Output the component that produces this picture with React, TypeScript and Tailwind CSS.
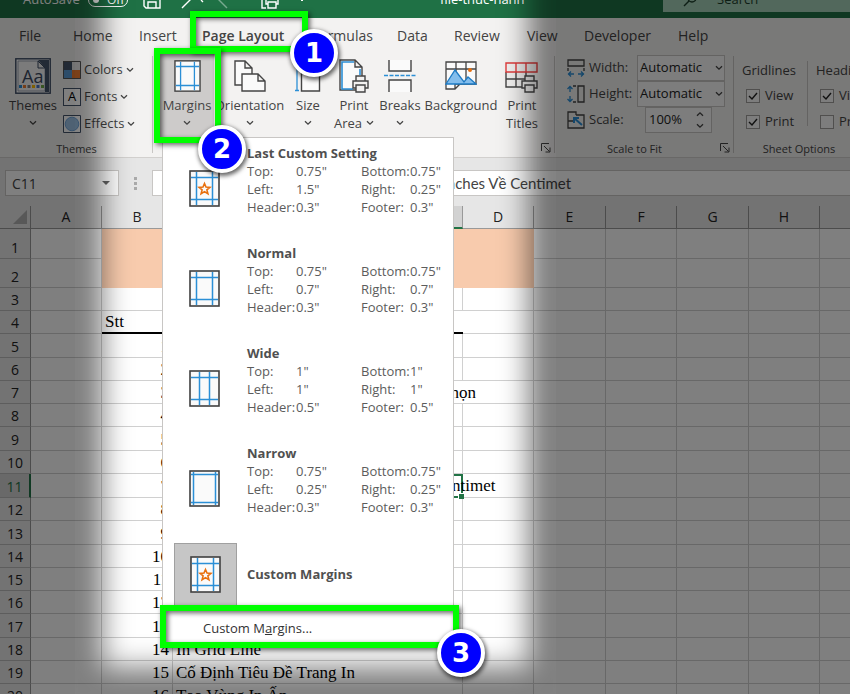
import type { ReactNode } from 'react';

type IconKind = 'star' | 'normal' | 'wide' | 'narrow';

interface MarginPreset {
  name: string;
  icon: IconKind;
  rows: [string, string, string, string][];
}

const presets: MarginPreset[] = [
  {
    name: 'Last Custom Setting',
    icon: 'star',
    rows: [
      ['Top:', '0.75"', 'Bottom:', '0.75"'],
      ['Left:', '1.5"', 'Right:', '0.25"'],
      ['Header:', '0.3"', 'Footer:', '0.3"'],
    ],
  },
  {
    name: 'Normal',
    icon: 'normal',
    rows: [
      ['Top:', '0.75"', 'Bottom:', '0.75"'],
      ['Left:', '0.7"', 'Right:', '0.7"'],
      ['Header:', '0.3"', 'Footer:', '0.3"'],
    ],
  },
  {
    name: 'Wide',
    icon: 'wide',
    rows: [
      ['Top:', '1"', 'Bottom:', '1"'],
      ['Left:', '1"', 'Right:', '1"'],
      ['Header:', '0.5"', 'Footer:', '0.5"'],
    ],
  },
  {
    name: 'Narrow',
    icon: 'narrow',
    rows: [
      ['Top:', '0.75"', 'Bottom:', '0.75"'],
      ['Left:', '0.25"', 'Right:', '0.25"'],
      ['Header:', '0.3"', 'Footer:', '0.3"'],
    ],
  },
];

// [left/right guide offset, top/bottom guide offset]
const guides: Record<IconKind, [number, number]> = {
  star: [7, 7],
  normal: [7, 7],
  wide: [10, 7],
  narrow: [4, 4],
};

function MarginIcon({ kind, className }: { kind: IconKind; className: string }) {
  const [gx, gy] = guides[kind];
  return (
    <svg viewBox="0 0 31 37" className={className} fill="none">
      <rect x="1" y="1" width="29" height="35" fill="#fafafa" stroke="#404040" strokeWidth="1.6" />
      <path
        d={`M${gx + 0.5} 2V35M${30.5 - gx} 2V35M2 ${gy + 0.5}H29M2 ${36.5 - gy}H29`}
        stroke="#2b8fd6"
        strokeWidth="1.5"
      />
      {kind === 'star' && (
        <path
          d="M15.5 13.5l1.5 3.6 3.9.3-3 2.5 1 3.8-3.4-2.1-3.4 2.1 1-3.8-3-2.5 3.9-.3z"
          stroke="#e8700f"
          strokeWidth="1.6"
        />
      )}
    </svg>
  );
}

function Chevron() {
  return (
    <svg viewBox="0 0 8 6" className="h-[6px] w-2 shrink-0" fill="none" stroke="#444" strokeWidth="1.3">
      <path d="M1 1.2l3 3 3-3" />
    </svg>
  );
}

function Launcher() {
  return (
    <button aria-label="Dialog launcher" className="absolute right-1 bottom-1">
      <svg viewBox="0 0 10 10" className="h-[10px] w-[10px]" fill="none" stroke="#444">
        <path d="M.5 8V.5H8M3 3l5.5 5.5M9 4.5V9H4.5" />
      </svg>
    </button>
  );
}

interface BigButtonProps {
  icon: ReactNode;
  lines: string[];
  className: string;
  noChevron?: boolean;
}

function BigButton({ icon, lines, className, noChevron }: BigButtonProps) {
  return (
    <button className={`flex shrink-0 flex-col items-center pt-1 ${className}`}>
      <span className="flex h-10 items-center">{icon}</span>
      <span className="h-[18px] leading-[18px] whitespace-nowrap">{lines[0]}</span>
      <span className="flex h-[17px] items-center gap-1 leading-[18px]">
        {lines[1]}
        {!noChevron && <Chevron />}
      </span>
    </button>
  );
}

function GroupLabel({ children, className = '' }: { children: string; className?: string }) {
  return (
    <h2 className={`absolute inset-x-0 bottom-0 text-center text-[11px] leading-[16px] ${className}`}>{children}</h2>
  );
}

function Printer({ x, y }: { x: number; y: number }) {
  return (
    <g transform={`translate(${x} ${y})`} stroke="#444" strokeWidth="1.4" fill="#f3f2f1">
      <path d="M4 6V1h9v5M1 6h15v7H1z" />
      <path d="M4 10h9v7H4z" />
    </g>
  );
}

function Ribbon() {
  return (
    <div className="flex h-[106px] overflow-hidden border-b border-[#d2d0ce] bg-[#f3f2f1] text-[#444]">
      {/* Themes */}
      <section className="relative flex w-[153px] shrink-0 pl-[5px]">
        <BigButton
          className="w-14"
          lines={['Themes']}
          icon={
            <svg viewBox="0 0 36 36" className="h-9 w-9" fill="none">
              <rect x=".8" y=".8" width="34.4" height="34.4" fill="#fff" stroke="#3b4a63" strokeWidth="1.4" />
              <path d="M3 3h20l7 7v23H3z" fill="#f6f6f6" stroke="#8a94a6" strokeWidth=".8" />
              <path d="M23 2h11v32h-4V10z" fill="#44546a" />
              <path d="M23 3v7h7z" fill="#eee" stroke="#3b4a63" />
              <text x="7" y="25" fontSize="18" fontFamily="Open Sans, sans-serif" fill="#3b4a63">Aa</text>
              <path d="M4 27h3v3H4z" fill="#2b8fd6" />
              <path d="M8 27h3v3H8z" fill="#ed7d31" />
              <path d="M12.500 27h3v3h-3z" fill="#7f7f7f" />
              <path d="M17 27h3v3h-3z" fill="#ffc000" />
              <path d="M21.500 27h3v3h-3z" fill="#4472c4" />
              <path d="M26 27h3v3h-3z" fill="#70ad47" />
            </svg>
          }
        />
        <div className="flex flex-col pt-1 pl-[2px]">
          <button className="flex h-[27px] items-center gap-[3px]">
            <svg viewBox="0 0 18 18" className="h-[18px] w-[18px]">
              <path d="M0 0h9v9H0z" fill="#44546a" />
              <path d="M9 0h9v9H9z" fill="#e7e6e6" />
              <path d="M0 9h9v9H0z" fill="#5b9bd5" />
              <path d="M9 9h9v9H9z" fill="#ed7d31" />
              <path d="M.5 .5h17v17H.5z" fill="none" stroke="#555" />
            </svg>
            Colors <Chevron />
          </button>
          <button className="flex h-[27px] items-center gap-[3px]">
            <span className="flex h-[18px] w-[18px] items-center justify-center border border-[#44546a] bg-white text-[13px] leading-none text-black">A</span>
            Fonts <Chevron />
          </button>
          <button className="flex h-[27px] items-center gap-[3px]">
            <svg viewBox="0 0 18 18" className="h-[18px] w-[18px]">
              <path d="M.5 .5h17v17H.5z" fill="#fff" stroke="#44546a" />
              <circle cx="9" cy="9" r="6.800" fill="#9dc3e6" stroke="#6fa3d8" />
            </svg>
            Effects <Chevron />
          </button>
        </div>
        <GroupLabel>Themes</GroupLabel>
        <div className="absolute right-0 top-1 bottom-1 border-r border-[#c8c6c4]" />
      </section>

      {/* Page setup */}
      <section className="relative flex w-[402px] shrink-0 pl-[7px]">
        <BigButton
          className="h-[85px] w-[54px] bg-[#cdcbca]"
          lines={['Margins']}
          icon={<MarginIcon kind="normal" className="h-8 w-[27px]" />}
        />
        <BigButton
          className="w-[71px]"
          lines={['Orientation']}
          icon={
            <svg viewBox="0 0 32 32" className="h-8 w-8" fill="#fafafa" stroke="#444" strokeWidth="1.4">
              <path d="M1 1h10l7 7v17H1zM11 1v7h7" />
              <path d="M8 14h16l7 7v10H8zM24 14v7h7" />
            </svg>
          }
        />
        <BigButton
          className="w-[46px]"
          lines={['Size']}
          icon={
            <svg viewBox="0 0 26 32" className="h-8 w-[26px]" fill="none">
              <path d="M6.500 1h11l7 7v23h-18zM17.500 1v7h7" fill="#fafafa" stroke="#444" strokeWidth="1.4" />
              <path d="M2 6v25M0 6.500h4M0 30.500h4M7 1h10" stroke="#2b8fd6" strokeWidth="1.3" />
            </svg>
          }
        />
        <BigButton
          className="w-[46px]"
          lines={['Print', 'Area']}
          icon={
            <svg viewBox="0 0 32 34" className="h-[34px] w-8" fill="none">
              <path d="M2 1h15l7 7v23H2zM17 1v7h7" fill="#fafafa" stroke="#444" strokeWidth="1.4" />
              <path d="M16 3H4v27h11M22 10v6" stroke="#2b8fd6" strokeWidth="1.600" />
              <Printer x={14} y={16} />
            </svg>
          }
        />
        <BigButton
          className="w-[46px]"
          lines={['Breaks']}
          icon={
            <svg viewBox="0 0 32 32" className="h-8 w-8" fill="none" stroke="#444" strokeWidth="1.4">
              <path d="M5 0v11h22V0M5 32V20h22v12" fill="#fafafa" />
              <path d="M0 15.500h32" stroke="#2b8fd6" strokeDasharray="4 1.500" />
            </svg>
          }
        />
        <BigButton
          className="w-[76px]"
          lines={['Background']}
          noChevron
          icon={
            <svg viewBox="0 0 32 32" className="h-8 w-8" fill="none" stroke="#444" strokeWidth="1.3">
              <path d="M1 2h30v22H15l-5 5H1zM1 9h30M11 2v22M21 2v22M10 29v-5h5" fill="#fafafa" />
              <path d="M1 24l9-14 9 12 4-5 8 7z" fill="#83bdec" stroke="#1e7bc4" />
              <circle cx="25" cy="10" r="2" fill="#e8700f" stroke="none" />
            </svg>
          }
        />
        <BigButton
          className="w-[46px]"
          lines={['Print', 'Titles']}
          noChevron
          icon={
            <svg viewBox="0 0 34 34" className="h-[34px] w-[34px]" fill="none" strokeWidth="1.4">
              <path d="M1 13v15h18M11 13v15M21 13v6M1 20h20" stroke="#444" />
              <path d="M1 4h31v9H1zM11 4v9M21 4v9" stroke="#e03c3c" />
              <Printer x={16} y={16} />
            </svg>
          }
        />
        <Launcher />
        <div className="absolute right-0 top-1 bottom-1 border-r border-[#c8c6c4]" />
      </section>

      {/* Scale to fit */}
      <section className="relative w-[179px] shrink-0 pt-[3px] pl-3">
        <div className="flex h-[26px] items-center">
          <svg viewBox="0 0 18 18" className="mr-1 h-[18px] w-[18px]" fill="none" stroke="#444" strokeWidth="1.3">
            <path d="M1 1h16v6H1zM1 9v3M17 9v3" />
            <path d="M1 15h6M11 15h6M4 12.500L1.500 15 4 17.500M14 12.500l2.500 2.500-2.500 2.500" stroke="#2b8fd6" />
          </svg>
          <label htmlFor="fit-width" className="w-12">Width:</label>
          <ComboBox id="fit-width" />
        </div>
        <div className="flex h-[26px] items-center">
          <svg viewBox="0 0 18 18" className="mr-1 h-[18px] w-[18px]" fill="none" stroke="#444" strokeWidth="1.3">
            <path d="M11 1h6v16h-6zM6 1h3M6 17h3" />
            <path d="M3 1v6M3 11v6M.5 4L3 1.500 5.500 4M.5 14L3 16.500 5.500 14" stroke="#2b8fd6" />
          </svg>
          <label htmlFor="fit-height" className="w-12">Height:</label>
          <ComboBox id="fit-height" />
        </div>
        <div className="flex h-[26px] items-center">
          <svg viewBox="0 0 18 18" className="mr-1 h-[18px] w-[18px]" fill="none" stroke="#444" strokeWidth="1.3">
            <path d="M1 10V1h8v3M9 4h8v13H1v-7h5" />
            <path d="M15 14L7 7M7 12V7h5" stroke="#2b8fd6" strokeWidth="2" />
          </svg>
          <label htmlFor="fit-scale" className="w-14">Scale:</label>
          <div className="flex h-[26px] w-[67px] items-center border border-[#c8c6c4] bg-[#fafafa]">
            <input id="fit-scale" defaultValue="100%" className="w-[50px] bg-transparent pl-[3px] text-[#222]" />
            <div className="flex flex-col gap-[6px]">
              <button aria-label="Increase scale" className="rotate-180"><Chevron /></button>
              <button aria-label="Decrease scale"><Chevron /></button>
            </div>
          </div>
        </div>
        <GroupLabel className="pr-5">Scale to Fit</GroupLabel>
        <Launcher />
        <div className="absolute right-0 top-1 bottom-1 border-r border-[#c8c6c4]" />
      </section>

      {/* Sheet options */}
      <section className="relative flex w-[130px] shrink-0 pt-[5px]">
        <OptionColumn title="Gridlines" print />
        <div className="mt-1 h-[65px] border-r border-[#c8c6c4]" />
        <OptionColumn title="Headings" />
        <GroupLabel>Sheet Options</GroupLabel>
      </section>
    </div>
  );
}

function ComboBox({ id }: { id: string }) {
  return (
    <div className="relative">
      <select id={id} className="h-[26px] w-[88px] appearance-none border border-[#c8c6c4] bg-[#fafafa] pl-[2px] text-[#222]">
        <option>Automatic</option>
      </select>
      <span className="pointer-events-none absolute top-[10px] right-[2px]"><Chevron /></span>
    </div>
  );
}

function OptionColumn({ title, print = false }: { title: string; print?: boolean }) {
  return (
    <fieldset className="w-[73px] shrink-0 pl-2">
      <legend className="h-[26px] leading-[26px] whitespace-nowrap">{title}</legend>
      {[
        { label: 'View', on: true },
        { label: 'Print', on: print },
      ].map(({ label, on }) => (
        <label key={label} className="flex h-[26px] items-center gap-[5px] pl-1">
          <span className="relative flex">
            <input
              type="checkbox"
              defaultChecked={on}
              className="peer h-[14px] w-[14px] appearance-none border border-[#a19f9d] bg-[#fafafa]"
            />
            <svg
              viewBox="0 0 14 14"
              className="pointer-events-none absolute inset-0 hidden h-[14px] w-[14px] peer-checked:block"
              fill="none"
              stroke="#222"
              strokeWidth="1.4"
            >
              <path d="M3 7l3 3 5-6" />
            </svg>
          </span>
          {label}
        </label>
      ))}
    </fieldset>
  );
}

const tabs = [
  { name: 'File', className: 'w-[54px]' },
  { name: 'Home', className: 'w-[66px]' },
  { name: 'Insert', className: 'w-[63px]' },
  { name: 'Page Layout', className: 'w-[110px]' },
  { name: 'Formulas', className: 'w-[85px]' },
  { name: 'Data', className: 'w-[57px]' },
  { name: 'Review', className: 'w-[73px]' },
  { name: 'View', className: 'w-[57px]' },
  { name: 'Developer', className: 'w-[94px]' },
  { name: 'Help', className: 'w-[53px]' },
];

function TitleBar() {
  return (
    <header className="flex h-[18px] items-end overflow-hidden bg-[#1f7145] text-[13px] text-white">
      <div className="flex h-9 w-full shrink-0 items-center">
        <span className="w-[88px] pl-[23px]">AutoSave</span>
        <button className="flex h-[14px] w-10 items-center rounded-full border border-white pl-1">
          <span className="h-[6px] w-[6px] rounded-full bg-white" />
          <span className="pl-2 text-xs leading-none">Off</span>
        </button>
        <svg viewBox="0 0 18 18" className="ml-[15px] h-[18px] w-[18px]" fill="none" stroke="#fff" strokeWidth="1.4">
          <path d="M1 1h16v16H3l-2-2zM5 17v-6h8v6" />
        </svg>
        <svg viewBox="0 0 48 18" className="ml-5 h-[18px] w-12" fill="none" stroke="#fff" strokeWidth="1.4">
          <path d="M1 17L12 6M20 9l2 2" />
          <path d="M46 17L35 6" opacity=".4" />
        </svg>
        <svg viewBox="0 0 18 18" className="ml-[32px] h-[18px] w-[18px]" fill="none" stroke="#fff" strokeWidth="1.4">
          <path d="M5 17H1V1h11v5M7 13H5V8h12v5h-2M7 11h8v6H7z" />
        </svg>
        <span className="ml-[19px]">
          <svg viewBox="0 0 8 6" className="h-[6px] w-2" fill="none" stroke="#fff"><path d="M1 1l3 3 3-3" /></svg>
        </span>
        <span className="ml-[134px] w-[223px] whitespace-nowrap">file-thuc-hanh</span>
        <div className="flex h-6 flex-1 items-center bg-[#a5d0b8] text-[#1d3f2c]">
          <svg viewBox="0 0 14 14" className="mr-5 ml-5 h-[14px] w-[14px]" fill="none" stroke="currentColor" strokeWidth="1.4">
            <path d="M1 13l5-5" />
            <circle cx="9" cy="5" r="4" />
          </svg>
          <input aria-label="Search" placeholder="Search" className="w-24 bg-transparent placeholder:text-[#1d3f2c]" />
        </div>
      </div>
    </header>
  );
}

function FormulaBar() {
  return (
    <div className="flex h-12 items-center bg-[#e6e6e6] pt-[2px] text-[#444]">
      <div className="ml-[5px] flex h-[26px] w-[114px] items-center border border-[#c8c6c4] bg-white pr-2">
        <input aria-label="Name Box" defaultValue="C11" className="min-w-0 flex-1 bg-transparent pl-[6px] text-[14px]" />
        <svg viewBox="0 0 8 4" className="h-1 w-2" fill="#666"><path d="M0 0h8L4 4z" /></svg>
      </div>
      <div className="mx-[15px] flex flex-col gap-[2px]">
        <i className="h-[3px] w-[3px] bg-[#aaa]" />
        <i className="h-[3px] w-[3px] bg-[#aaa]" />
        <i className="h-[3px] w-[3px] bg-[#aaa]" />
      </div>
      <div className="flex h-[26px] flex-1 items-center border border-r-0 border-[#c8c6c4] bg-white font-[Lato,sans-serif] text-[15px]">
        <input
          aria-label="Formula"
          defaultValue="Chuyển Đổi Đơn Vị In Từ Inches Về Centimet"
          className="ml-[122px] w-full bg-transparent"
        />
      </div>
    </div>
  );
}

interface SheetRow {
  n: number;
  height: string;
  b?: string;
  c?: string;
}

const sheetRows: SheetRow[] = [
  { n: 1, height: 'h-[30px]' },
  { n: 2, height: 'h-[29px]' },
  { n: 3, height: 'h-[23px]' },
  { n: 4, height: 'h-[23px]', b: 'Stt' },
  { n: 5, height: 'h-[24px]', b: '1' },
  { n: 6, height: 'h-[23px]', b: '2' },
  { n: 7, height: 'h-[23px]', b: '3', c: 'Cách Chỉ In Các Vùng Dữ Liệu Được Chọn' },
  { n: 8, height: 'h-[23px]', b: '4' },
  { n: 9, height: 'h-[24px]', b: '5' },
  { n: 10, height: 'h-[23px]', b: '6' },
  { n: 11, height: 'h-[23px]', b: '7', c: 'Chuyển Đổi Đơn Vị In Từ Inches Về Centimet' },
  { n: 12, height: 'h-[23px]', b: '8' },
  { n: 13, height: 'h-[24px]', b: '9' },
  { n: 14, height: 'h-[23px]', b: '10' },
  { n: 15, height: 'h-[23px]', b: '11' },
  { n: 16, height: 'h-[23px]', b: '12' },
  { n: 17, height: 'h-[24px]', b: '13' },
  { n: 18, height: 'h-[23px]', b: '14', c: 'In Grid Line' },
  { n: 19, height: 'h-[23px]', b: '15', c: 'Cố Định Tiêu Đề Trang In' },
  { n: 20, height: 'h-[23px]', b: '16', c: 'Tạo Vùng In Ấn' },
];

function Sheet() {
  return (
    <table className="w-full min-w-[891px] table-fixed border-separate border-spacing-0 bg-white">
      <colgroup>
        <col className="w-[31px]" />
        <col className="w-[71px]" />
        <col className="w-[71px]" />
        <col className="w-[290px]" />
        <col className="w-[71px]" />
        <col className="w-[72px]" />
        <col className="w-[71px]" />
        <col className="w-[72px]" />
        <col className="w-[71px]" />
        <col />
      </colgroup>
      <thead>
        <tr className="h-[23px] bg-[#e6e6e6] text-[14px] leading-[18px] text-[#222]">
          <th className="border-r border-b border-[#999]">
            <svg viewBox="0 0 14 14" className="ml-auto mr-[3px] h-[14px] w-[14px]" fill="#b0b0b0"><path d="M14 0v14H0z" /></svg>
          </th>
          {['A', 'B', 'C', 'D', 'E', 'F', 'G', 'H', ''].map(col => (
            <th
              key={col}
              className={
                col === 'C'
                  ? 'border-r border-b-2 border-r-[#999] border-b-[#217346] bg-[#d2d2d2] font-normal'
                  : 'border-r border-b border-[#999] font-normal'
              }
            >
              {col}
            </th>
          ))}
        </tr>
      </thead>
      <tbody className="font-['Liberation_Serif',serif] text-[17px] leading-[20px] text-black">
        {sheetRows.map(row => (
          <tr key={row.n} className={row.height}>
            <th
              className={
                row.n === 11
                  ? "border-r-2 border-b border-r-[#217346] border-b-[#bbb] bg-[#d2d2d2] p-0 align-bottom font-['Open_Sans',sans-serif] text-[14px] font-normal text-[#217346]"
                  : "border-r border-b border-r-[#999] border-b-[#bbb] bg-[#e6e6e6] p-0 align-bottom font-['Open_Sans',sans-serif] text-[14px] font-normal text-[#222]"
              }
            >
              {row.n}
            </th>
            <td className="border-r border-b border-[#d0d0d0]" />
            {row.n === 1 && <td colSpan={3} rowSpan={2} className="bg-[#f8cbad]" />}
            {row.n > 2 && (
              <>
                <td
                  className={
                    row.n === 4
                      ? 'border-b-2 border-black p-0 pl-[3px] align-bottom'
                      : 'border-r border-b border-[#d0d0d0] p-0 pr-[3px] text-right align-bottom'
                  }
                >
                  {row.b}
                </td>
                <td
                  className={
                    row.n === 4
                      ? 'border-b-2 border-black p-0'
                      : row.n === 11
                        ? 'relative border-2 border-[#217346] p-0 pl-[2px] align-bottom whitespace-nowrap'
                        : row.n === 7
                          ? 'border-b border-[#d0d0d0] p-0 pl-1 align-bottom whitespace-nowrap'
                          : 'border-r border-b border-[#d0d0d0] p-0 pl-[3px] align-bottom whitespace-nowrap'
                  }
                >
                  {row.c}
                  {row.n === 11 && (
                    <i className="absolute -right-[3px] -bottom-[3px] h-[6px] w-[6px] border-t border-l border-white bg-[#217346]" />
                  )}
                </td>
                <td className="border-r border-b border-[#d0d0d0]" />
              </>
            )}
            <td className="border-r border-b border-[#d0d0d0]" />
            <td className="border-r border-b border-[#d0d0d0]" />
            <td className="border-r border-b border-[#d0d0d0]" />
            <td className="border-r border-b border-[#d0d0d0]" />
            <td className="border-b border-[#d0d0d0]" />
          </tr>
        ))}
      </tbody>
    </table>
  );
}

function MarginsMenu() {
  return (
    <div role="menu" className="absolute top-[137px] left-[162px] w-[292px] border border-[#c8c6c4] bg-white text-[13px] leading-[18px] text-[#5c5c5c]">
      {presets.map(preset => (
        <button key={preset.name} role="menuitem" className="flex h-[100px] w-full items-center pl-[26px] text-left">
          <MarginIcon kind={preset.icon} className="h-[37px] w-[31px] shrink-0" />
          <span className="grid grid-cols-[49px_65px_49px_auto] self-start pt-[6px] pl-[27px]">
            <strong className="col-span-4 text-[#505050]">{preset.name}</strong>
            {preset.rows.flat().map((text, i) => (
              <span key={i}>{text}</span>
            ))}
          </span>
        </button>
      ))}
      <button role="menuitem" className="flex h-[72px] w-full items-center pl-[11px] text-left">
        <span className="flex h-[63px] w-[63px] items-center justify-center border border-[#a0a0a0] bg-[#c6c6c6]">
          <MarginIcon kind="star" className="h-[37px] w-[31px]" />
        </span>
        <strong className="pl-[10px] text-[#505050]">Custom Margins</strong>
      </button>
      <button role="menuitem" className="flex h-9 w-full items-center pl-10 text-left text-[#333]">
        Custom M<u>a</u>rgins...
      </button>
    </div>
  );
}

function Badge({ n, className }: { n: number; className: string }) {
  return (
    <span
      className={`absolute flex h-12 w-12 items-center justify-center rounded-full border-4 border-white bg-[#0000ff] font-['DejaVu_Sans',sans-serif] text-[26px] leading-none font-bold text-white shadow-[1px_2px_4px_1px_rgba(0,0,0,0.6)] ${className}`}
    >
      {n}
    </span>
  );
}

function Frame({ className }: { className: string }) {
  return (
    <div
      className={`pointer-events-none absolute border-[6px] border-[#00ff00] shadow-[2px_2px_5px_rgba(0,0,0,0.6),inset_2px_2px_5px_rgba(0,0,0,0.6)] ${className}`}
    />
  );
}

export default function App() {
  return (
    <div className="relative h-screen w-full overflow-hidden bg-[#e6e6e6] font-['Open_Sans',sans-serif] text-[13px]">
      <TitleBar />
      <nav className="flex h-[34px] items-center bg-[#f3f2f1] pl-[19px] text-[14px] text-[#444]">
        {tabs.map(tab => (
          <button
            key={tab.name}
            className={`shrink-0 text-left whitespace-nowrap ${tab.className} ${tab.name === 'Page Layout' ? 'font-semibold' : ''}`}
          >
            {tab.name}
          </button>
        ))}
      </nav>
      <Ribbon />
      <FormulaBar />
      <Sheet />

      {/* Dimmed surround with a soft-edged spotlight */}
      <div className="pointer-events-none absolute inset-0 overflow-hidden">
        <div className="absolute -top-20 left-[75px] h-[775px] w-[481px] shadow-[inset_0_0_28px_28px_rgba(0,0,0,0.5),0_0_0_3000px_rgba(0,0,0,0.5)]" />
      </div>

      <MarginsMenu />
      <Frame className="top-[11px] left-[190px] h-[41px] w-[118px]" />
      <Frame className="top-[48px] left-[154px] h-[95px] w-[67px]" />
      <Frame className="top-[605px] left-[160px] h-[43px] w-[299px]" />
      <Badge n={1} className="top-[29px] left-[290px]" />
      <Badge n={2} className="top-[125px] left-[198px]" />
      <Badge n={3} className="top-[629px] left-[437px]" />
    </div>
  );
}
